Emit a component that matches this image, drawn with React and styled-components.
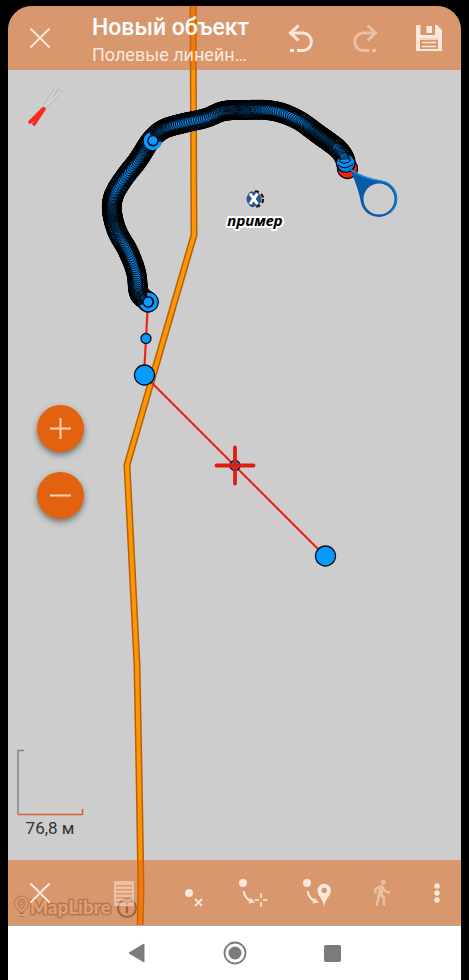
import React from "react";
import styled, { createGlobalStyle } from "styled-components";
import { MdDirectionsWalk } from "react-icons/md";

const GlobalStyle = createGlobalStyle`
  * {
    box-sizing: border-box;
  }
  body {
    margin: 0;
    background: #000;
    font-family: Roboto, "Noto Sans", sans-serif;
  }
  button {
    border: 0;
    padding: 0;
    background: none;
    font: inherit;
    cursor: pointer;
  }
  svg {
    display: block;
  }
`;

const Device = styled.div`
  display: flex;
  flex-direction: column;
  min-height: 100vh;
  padding: 6px 8px 0;
`;

const MapScreen = styled.main`
  position: relative;
  flex: 1;
  display: flex;
  flex-direction: column;
  overflow: hidden;
  background: #cdcdcd;
  border-radius: 24px 24px 0 0;
`;

const MapCanvas = styled.svg`
  position: absolute;
  top: 0;
  left: 0;
  width: 100%;
  height: 100%;
`;

const ObjectName = styled.text`
  font: italic bold 15px "Noto Sans", sans-serif;
  text-anchor: middle;
  fill: #000;
  stroke: #fff;
  stroke-width: 4px;
  stroke-linejoin: round;
  paint-order: stroke;
`;

const Attribution = styled.div`
  position: absolute;
  left: 6px;
  bottom: 4px;
  display: flex;
  align-items: center;
  gap: 1px;
`;

const Wordmark = styled.text`
  font: 900 19px Lato, sans-serif;
  fill: #dadada;
  stroke: #8c8c8c;
  stroke-width: 3px;
  stroke-linejoin: round;
  paint-order: stroke;
`;

const Bar = styled.div`
  position: relative;
  display: flex;
  align-items: center;
  height: ${props => props.$height};
  background: rgba(227, 98, 14, 0.5);
`;

const BarButton = styled.button`
  display: flex;
  flex: none;
  align-items: center;
  justify-content: center;
  width: ${props => (props.$narrow ? "48px" : "64px")};
  height: 64px;
  color: #fce8db;
  opacity: ${props => (props.$dim ? 0.5 : 1)};
`;

const Titles = styled.div`
  flex: 1;
  min-width: 0;
  padding: 6px 8px 0 20px;
  color: #fff;
`;

const Title = styled.h1`
  margin: 0;
  font-size: 23px;
  font-weight: 500;
  line-height: 28px;
  white-space: nowrap;
`;

const Subtitle = styled.p`
  margin: 0;
  color: #fce8db;
  font-size: 18px;
  line-height: 26px;
  white-space: nowrap;
`;

const MapControls = styled.div`
  position: relative;
  flex: 1;
  display: flex;
  flex-direction: column;
  align-items: flex-start;
  padding: 16px 8px 20px;
`;

const Spacer = styled.div`
  flex: ${props => props.$grow || 1};
`;

const LayerButton = styled.button`
  margin-left: 8px;
`;

const ZoomGroup = styled.div`
  display: flex;
  flex-direction: column;
  gap: 20px;
  margin-left: 21px;
`;

const ZoomButton = styled.button`
  display: flex;
  align-items: center;
  justify-content: center;
  width: 47px;
  height: 47px;
  border-radius: 50%;
  background: #e3620f;
  box-shadow: 0 3px 6px rgba(0, 0, 0, 0.45);
`;

const Scale = styled.div`
  width: 68px;
`;

const ScaleLabel = styled.div`
  color: #333;
  font-size: 17px;
  line-height: 24px;
  text-align: center;
`;

const SystemNav = styled.nav`
  display: flex;
  align-items: center;
  justify-content: center;
  gap: 50px;
  height: 55px;
  border-top: 1px solid #b0a8a4;
  background: #fff;
`;

const NavButton = styled.button`
  display: flex;
  align-items: center;
  justify-content: center;
  width: 48px;
  height: 48px;
  color: #7b7b7b;
`;

const road = "193,0 194,235 127,465 137,665 139,770 141,890 140,930";

const track = [
  [146, 300],
  [139, 293],
  [136, 272],
  [128, 251],
  [117, 231],
  [112, 211],
  [114, 195],
  [124, 178],
  [138, 160],
  [151, 140],
  [164, 129],
  [184, 123],
  [206, 118],
  [224, 111],
  [245, 110],
  [266, 110],
  [282, 113],
  [300, 121],
  [318, 134],
  [337, 148],
  [344, 157],
  [346, 164]
];

function curve(a, b, c, d, t) {
  return (
    0.5 *
    (2 * b +
      (c - a) * t +
      (2 * a - 5 * b + 4 * c - d) * t * t +
      (3 * b - a - 3 * c + d) * t * t * t)
  );
}

function samplePoints(points, minStep, maxStep, rate) {
  const result = [];
  const at = i => points[Math.max(0, Math.min(points.length - 1, i))];
  let n = 0;
  let t = 0;
  for (let i = 0; i < points.length - 1; i++) {
    const [p, q, r, s] = [at(i - 1), at(i), at(i + 1), at(i + 2)];
    const length = Math.hypot(r[0] - q[0], r[1] - q[1]);
    while (t < 1) {
      result.push([
        curve(p[0], q[0], r[0], s[0], t),
        curve(p[1], q[1], r[1], s[1], t)
      ]);
      const burst = Math.pow(Math.sin(n * rate), 4);
      t += (minStep + (maxStep - minStep) * burst) / length;
      n++;
    }
    t -= 1;
  }
  return result;
}

const vertices = samplePoints(track, 0.8, 1.8, 0.07);
const midpoints = samplePoints(track, 0.9, 2.4, 0.05);

const Vertex = ({ x, y, r = 10, fill = "#0a99ff" }) => (
  <circle cx={x} cy={y} r={r} fill={fill} stroke="#07131f" strokeWidth="1.3" />
);

const MapDrawing = () => (
  <MapCanvas viewBox="8 6 453 919" preserveAspectRatio="xMidYMid slice">
    <g fill="none" strokeLinejoin="round">
      <polyline points={road} stroke="#b4600c" strokeWidth="7" />
      <polyline points={road} stroke="#ff9500" strokeWidth="4" />
      <polyline
        points="148,302 144,375 325,556"
        stroke="#ee2418"
        strokeWidth="2.2"
      />
    </g>
    <Vertex x={347.5} y={168.5} fill="#ff1f0f" />
    <Vertex x={148} y={302} />
    <g fill="#0a7fdc" stroke="#000" strokeWidth="1.4">
      {vertices.map(([x, y], i) => (
        <circle key={i} cx={x} cy={y} r="9.3" />
      ))}
    </g>
    <g fill="#0a7fdc" stroke="#02060a" strokeWidth="1">
      {midpoints.map(([x, y], i) => (
        <circle key={i} cx={x} cy={y} r="4.6" />
      ))}
    </g>
    <circle
      cx="153"
      cy="141"
      r="7.400"
      fill="none"
      stroke="#0a99ff"
      strokeWidth="3.600"
      strokeDasharray="31 16"
      transform="rotate(5 153 141)"
    />
    <Vertex x={153} y={140.5} r={5} />
    <circle
      cx="148.500"
      cy="302"
      r="7.600"
      fill="none"
      stroke="#0a99ff"
      strokeWidth="3.800"
      strokeDasharray="34 14"
      transform="rotate(-100 148.5 302)"
    />
    <circle cx="148.500" cy="302" r="9.800" fill="none" stroke="#07131f" strokeWidth="1" />
    <Vertex x={148} y={302} r={5} />
    <path d="M337 162 Q345 157 354 161 Q352 169 345 170 Q339 168 337 162Z" fill="#0a8cf0" />
    <path
      d="M338 165 Q345 171 353 164 M339 161 Q345 166 351 160"
      fill="none"
      stroke="#000"
      strokeWidth="1"
    />
    <Vertex x={146} y={338.5} r={5} />
    <Vertex x={144.5} y={375} />
    <Vertex x={325.5} y={556} />
    <Vertex x={235} y={465.5} r={5} />
    <path
      d="M216.500 465.500 H253.500 M235 447.500 V483.500"
      stroke="#e01e10"
      strokeWidth="3.800"
      strokeLinecap="round"
    />
    <path
      d="M350 169 Q362 178 381 180.500 A18.300 18.300 0 1 1 361 203 Q359 190 350 169 Z M379 183.500 A15.500 15.500 0 1 0 379 214.500 A15.500 15.500 0 1 0 379 183.500 Z"
      fill="#0a5aa8"
      fillRule="evenodd"
    />
    <path
      d="M351 170 Q363 178.500 381 181 A18 18 0 0 1 391 212"
      fill="none"
      stroke="#1688d8"
      strokeWidth="1.600"
    />
    <circle cx="255.500" cy="199" r="8.500" fill="#dfc8c4" />
    <circle
      cx="255.500"
      cy="199"
      r="7.600"
      fill="none"
      stroke="#111"
      strokeWidth="2.200"
      strokeDasharray="4 3"
    />
    <circle cx="254" cy="199" r="7.500" fill="#2e5590" />
    <path d="M250 193.500 L257.500 204 M257.500 193.500 L250 204" stroke="#fff" strokeWidth="3" />
    <ObjectName x="255" y="226">
      пример
    </ObjectName>
  </MapCanvas>
);

const MapLibreLogo = () => (
  <svg width="102" height="26" viewBox="0 0 102 26">
    <g fill="none" strokeLinejoin="round">
      <path
        d="M7 15 C4 12 2 10 2 7 A5.500 5.500 0 0 1 13 7 C13 10 11 12 8 15 Z M5 19 H10"
        transform="translate(0 1)"
        stroke="#8c8c8c"
        strokeWidth="4"
      />
      <path
        d="M7 15 C4 12 2 10 2 7 A5.500 5.500 0 0 1 13 7 C13 10 11 12 8 15 Z M5 19 H10"
        transform="translate(0 1)"
        stroke="#dadada"
        strokeWidth="2"
      />
      <circle cx="7.500" cy="8" r="2" stroke="#8c8c8c" />
    </g>
    <Wordmark x="16" y="19">
      MapLibre
    </Wordmark>
  </svg>
);

const InfoIcon = () => (
  <svg width="20" height="20" viewBox="0 0 20 20" fill="none" stroke="#4c6470" strokeWidth="2">
    <circle cx="10" cy="10" r="9" />
    <path d="M10 8.500 V15 M10 5 V7" strokeWidth="2.400" />
  </svg>
);

const CloseIcon = () => (
  <svg width="22" height="22" viewBox="0 0 22 22" stroke="currentColor" strokeWidth="2">
    <path d="M1.500 1.500 L20.500 20.500 M20.500 1.500 L1.500 20.500" />
  </svg>
);

const UndoIcon = ({ flip }) => (
  <svg width="28" height="32" viewBox="0 0 28 32" fill="none" stroke="currentColor" strokeWidth="3">
    <g transform={flip ? "matrix(-1 0 0 1 28 0)" : undefined}>
      <path d="M11.500 3.500 L3.500 11 L11.500 18.500 M3.500 11 H16.500 A8.800 8.800 0 0 1 16.500 28.500 H10 M3 28.500 H7" />
    </g>
  </svg>
);

const SaveIcon = () => (
  <svg width="26" height="28" viewBox="0 0 26 28">
    <path
      fill="currentColor"
      fillRule="evenodd"
      d="M0 1 H4.500 V11 H19 V1 H21 L26 6 V27 H0 Z M4 14 V25 H22 V14 Z"
    />
    <path fill="currentColor" d="M10.500 2 H16 V9 H10.500 Z" />
    <path d="M4 15 H22 M6 18.500 H20 M6 22.500 H20" stroke="currentColor" strokeWidth="1.500" />
  </svg>
);

const ListIcon = () => (
  <svg width="22" height="30" viewBox="0 0 22 30">
    <path
      fill="currentColor"
      fillRule="evenodd"
      d="M0 3 H20 V28 H0 Z M2 7 V8.500 H18 V7 Z M2 11 V12.500 H18 V11 Z M2 15 V16.500 H18 V15 Z M2 19 V20.500 H18 V19 Z M2 23 V24.500 H18 V23 Z"
    />
  </svg>
);

const DeleteNodeIcon = () => (
  <svg width="28" height="28" viewBox="0 0 28 28">
    <circle cx="14" cy="14" r="4" fill="currentColor" />
    <path d="M20 20 L27 27 M27 20 L20 27" stroke="currentColor" strokeWidth="1.800" />
  </svg>
);

const CursorNodeIcon = () => (
  <svg width="30" height="30" viewBox="0 0 30 30" fill="none" stroke="currentColor" strokeWidth="2">
    <circle cx="5" cy="5" r="4" fill="currentColor" stroke="none" />
    <path d="M5.500 13 Q7 21 14 23.500" />
    <path d="M12.500 20 L17 24.500 L10.500 25.500 Z" fill="currentColor" stroke="none" />
    <path d="M16.500 22 H21 M25 22 H29.500 M23 15 V20 M23 24 V29" strokeWidth="1.500" />
  </svg>
);

const PinNodeIcon = () => (
  <svg width="30" height="30" viewBox="0 0 30 30" fill="none" stroke="currentColor" strokeWidth="2">
    <circle cx="5" cy="5" r="4" fill="currentColor" stroke="none" />
    <path d="M5.500 13 Q7 21 14 23.500" />
    <path d="M12.500 20 L17 24.500 L10.500 25.500 Z" fill="currentColor" stroke="none" />
    <path
      d="M22 29 C21.500 21 15.500 18 15.500 12.500 A6.700 6.700 0 0 1 28.900 12.500 C28.900 18 22.800 21 22 29 Z M22.200 9.800 A2.600 2.600 0 1 0 22.200 15 A2.600 2.600 0 1 0 22.200 9.800 Z"
      fill="currentColor"
      fillRule="evenodd"
      stroke="none"
    />
  </svg>
);

const MoreIcon = () => (
  <svg width="6" height="22" viewBox="0 0 6 22" fill="currentColor">
    <circle cx="3" cy="4" r="2.700" />
    <circle cx="3" cy="11" r="2.700" />
    <circle cx="3" cy="18" r="2.700" />
  </svg>
);

const SticksIcon = () => (
  <svg width="40" height="42" viewBox="0 0 40 42" fill="none" strokeLinecap="round">
    <g stroke="#b0b0b0" strokeWidth="3.800">
      <path d="M20 22 L32 3 M20 22 L36 6" />
    </g>
    <g stroke="#d2d2d2" strokeWidth="2.600">
      <path d="M20 22 L32 3 M20 22 L36 6" />
    </g>
    <path d="M19 23 L6 36 M20 23 L10 38" stroke="#fb2a1c" strokeWidth="3.600" />
  </svg>
);

function App() {
  return (
    <>
      <GlobalStyle />
      <Device>
        <MapScreen>
          <MapDrawing />
          <Attribution>
            <MapLibreLogo />
            <InfoIcon />
          </Attribution>
          <Bar as="header" $height="64px">
            <BarButton aria-label="Закрыть">
              <CloseIcon />
            </BarButton>
            <Titles>
              <Title>Новый объект</Title>
              <Subtitle>Полевые линейн…</Subtitle>
            </Titles>
            <BarButton aria-label="Отменить">
              <UndoIcon />
            </BarButton>
            <BarButton aria-label="Повторить" $dim>
              <UndoIcon flip />
            </BarButton>
            <BarButton aria-label="Сохранить">
              <SaveIcon />
            </BarButton>
          </Bar>
          <MapControls>
            <LayerButton aria-label="Слой">
              <SticksIcon />
            </LayerButton>
            <Spacer $grow={6} />
            <ZoomGroup>
              <ZoomButton aria-label="Приблизить">
                <svg width="21" height="21" viewBox="0 0 21 21" stroke="#fbd3b8" strokeWidth="2">
                  <path d="M0 10.500 H21 M10.500 0 V21" />
                </svg>
              </ZoomButton>
              <ZoomButton aria-label="Отдалить">
                <svg width="21" height="21" viewBox="0 0 21 21" stroke="#fbd3b8" strokeWidth="2">
                  <path d="M0 10.500 H21" />
                </svg>
              </ZoomButton>
            </ZoomGroup>
            <Spacer $grow={5} />
            <Scale>
              <svg width="68" height="67" viewBox="0 0 68 67" fill="none">
                <path d="M8 1.500 H2 V66" stroke="#858585" strokeWidth="1.500" />
                <path d="M2 65.500 H66.500 V60" stroke="#d9603a" strokeWidth="1.500" />
              </svg>
              <ScaleLabel>76,8 м</ScaleLabel>
            </Scale>
          </MapControls>
          <Bar $height="65px">
            <BarButton aria-label="Закрыть правку">
              <CloseIcon />
            </BarButton>
            <Spacer />
            <BarButton aria-label="Атрибуты" $dim>
              <ListIcon />
            </BarButton>
            <BarButton aria-label="Удалить узел">
              <DeleteNodeIcon />
            </BarButton>
            <BarButton aria-label="Узел в центре">
              <CursorNodeIcon />
            </BarButton>
            <BarButton aria-label="Узел по местоположению">
              <PinNodeIcon />
            </BarButton>
            <BarButton aria-label="Запись в движении" $dim>
              <MdDirectionsWalk size={29} />
            </BarButton>
            <BarButton aria-label="Ещё" $narrow>
              <MoreIcon />
            </BarButton>
          </Bar>
        </MapScreen>
        <SystemNav>
          <NavButton aria-label="Назад">
            <svg width="18" height="20" viewBox="0 0 18 20" fill="currentColor">
              <path d="M16 1 V19 L1 10 Z" stroke="currentColor" strokeLinejoin="round" />
            </svg>
          </NavButton>
          <NavButton aria-label="Домой">
            <svg width="24" height="24" viewBox="0 0 24 24">
              <circle cx="12" cy="12" r="10.500" fill="none" stroke="currentColor" strokeWidth="1.800" />
              <circle cx="12" cy="12" r="6.500" fill="currentColor" />
            </svg>
          </NavButton>
          <NavButton aria-label="Недавние">
            <svg width="17" height="17" viewBox="0 0 17 17">
              <rect width="17" height="17" rx="2" fill="currentColor" />
            </svg>
          </NavButton>
        </SystemNav>
      </Device>
    </>
  );
}

export default App;
